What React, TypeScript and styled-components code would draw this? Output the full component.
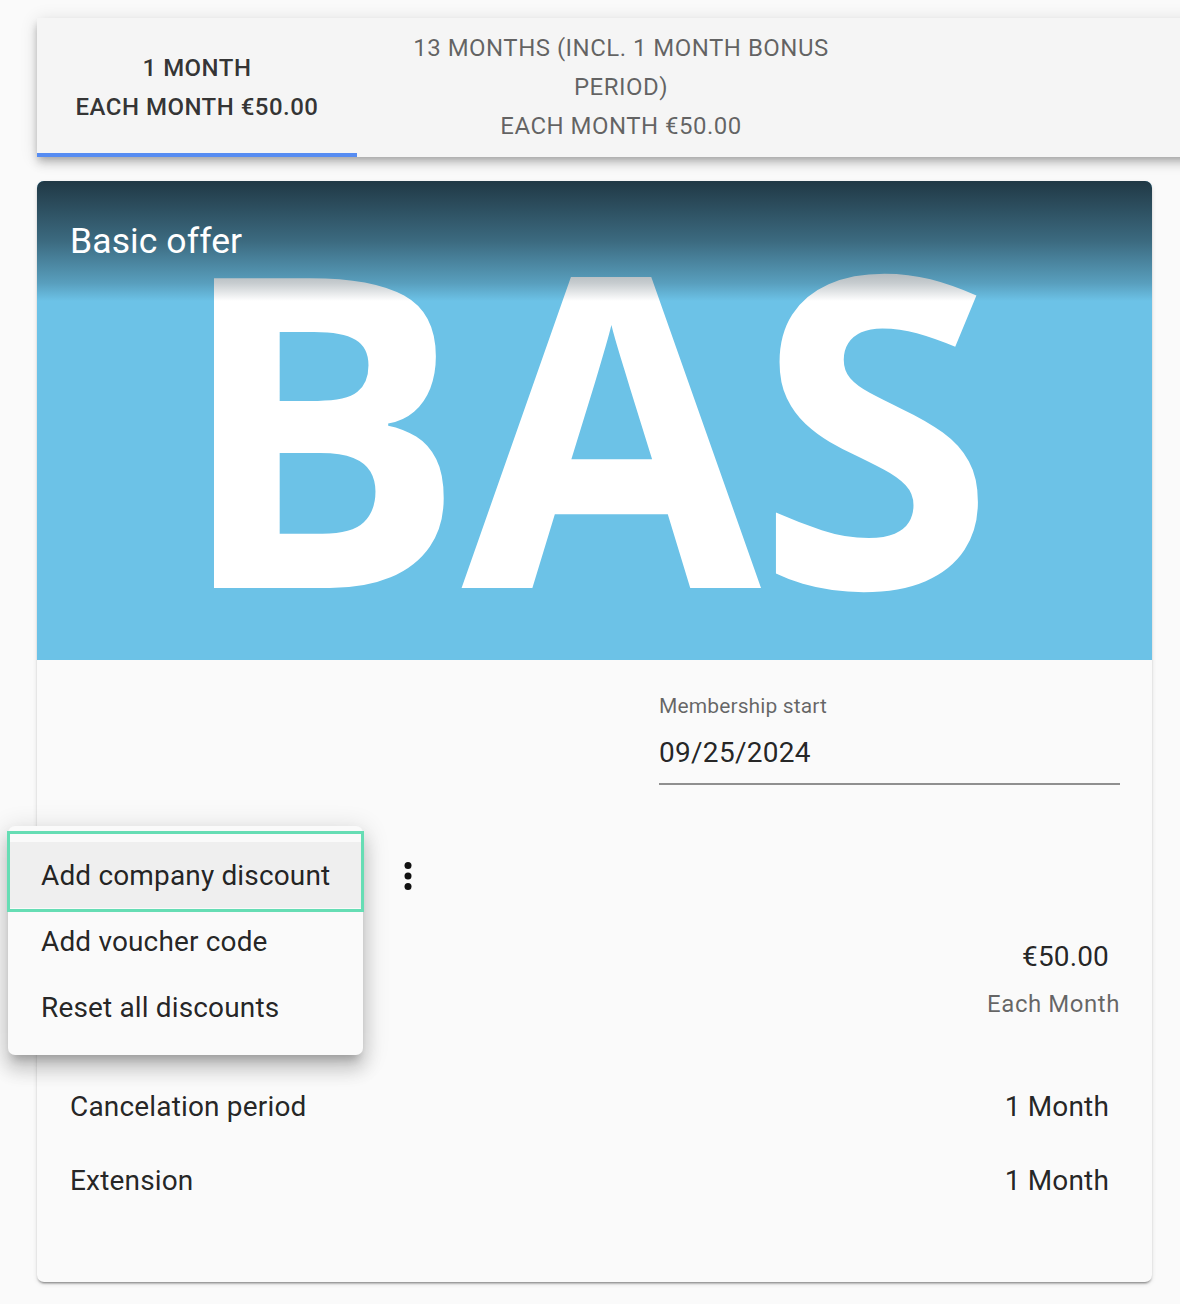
import React from "react";
import styled, { createGlobalStyle } from "styled-components";

const Global = createGlobalStyle`
  html, body { margin: 0; padding: 0; background: #fafafa; }
  body { font-family: Roboto, "Noto Sans", "Liberation Sans", sans-serif; -webkit-font-smoothing: antialiased; }
  * { box-sizing: border-box; }
`;

const Page = styled.div`
  position: relative;
  width: 1180px;
  min-height: 1304px;
  padding: 18px 0 0 37px;
  overflow: hidden;
`;

const TabBar = styled.div`
  display: flex;
  width: 1180px;
  height: 139px;
  background: #f5f5f5;
  box-shadow: 0 3.5px 7px -2px rgba(0,0,0,0.2), 0 7px 9px 0 rgba(0,0,0,0.14), 0 2px 17px 0 rgba(0,0,0,0.12);
`;

const Tab = styled.div<{ $w: number; $selected?: boolean }>`
  position: relative;
  width: ${(p) => p.$w}px;
  flex: none;
  display: flex;
  align-items: center;
  justify-content: center;
  padding: 0 28px;
  text-align: center;
  font-size: 24px;
  line-height: 39px;
  letter-spacing: 0.02em;
  text-transform: uppercase;
  font-weight: ${(p) => (p.$selected ? 500 : 400)};
  color: ${(p) => (p.$selected ? "rgba(0,0,0,0.8)" : "rgba(0,0,0,0.6)")};
  &::after {
    content: "";
    display: ${(p) => (p.$selected ? "block" : "none")};
    position: absolute;
    left: 0;
    right: 0;
    bottom: 0;
    height: 4px;
    background: #568cf2;
  }
`;

const Card = styled.div`
  margin-top: 24px;
  width: 1115px;
  border-radius: 7px;
  background: #fafafa;
  overflow: hidden;
  box-shadow: 0 3px 2px -2px rgba(0,0,0,0.3), 0 2px 2px 0 rgba(0,0,0,0.14), 0 2px 5px 0 rgba(0,0,0,0.1);
`;

const Media = styled.div`
  position: relative;
  height: 479px;
  background: #6cc2e7;
  overflow: hidden;
  padding: 22px 0 0 138px;
`;

const MediaLetters = styled.div`
  font-family: "Open Sans", "Liberation Sans", sans-serif;
  font-weight: 700;
  font-size: 434px;
  line-height: 434px;
  letter-spacing: -5px;
  color: #ffffff;
  white-space: nowrap;
  user-select: none;
`;

const Shade = styled.div`
  position: absolute;
  left: 0;
  right: 0;
  top: 0;
  height: 120px;
  background: linear-gradient(
    to bottom,
    rgba(30, 52, 64, 0.97) 0%,
    rgba(30, 52, 64, 0.62) 50%,
    rgba(30, 52, 64, 0.25) 85%,
    rgba(30, 52, 64, 0) 100%
  );
`;

const MediaTitle = styled.div`
  position: absolute;
  left: 33px;
  top: 40px;
  font-size: 35.5px;
  line-height: 40px;
  letter-spacing: 0.1px;
  color: #ffffff;
  font-weight: 400;
`;

const Body = styled.div`
  display: flex;
  flex-direction: column;
  padding: 34px 32px 65px 33px;
`;

const FieldRow = styled.div`
  display: flex;
  justify-content: flex-end;
`;

const DateField = styled.div`
  width: 461px;
  display: flex;
  flex-direction: column;
  border-bottom: 2px solid #8f8f8f;
  padding-bottom: 12px;
`;

const FieldLabel = styled.div`
  font-size: 21px;
  line-height: 24px;
  letter-spacing: 0.12px;
  color: rgba(0,0,0,0.6);
`;

const FieldValue = styled.div`
  margin-top: 17px;
  font-size: 28px;
  line-height: 36px;
  letter-spacing: 0.01em;
  color: rgba(0,0,0,0.87);
`;

const DiscountRow = styled.div`
  display: flex;
  align-items: center;
  height: 56px;
  margin-top: 63px;
  padding-left: 317px;
`;

const MoreButton = styled.button`
  width: 42px;
  height: 42px;
  padding: 0;
  border: none;
  background: transparent;
  display: flex;
  align-items: center;
  justify-content: center;
  color: #111;
`;

const PriceBlock = styled.div`
  margin-top: 32px;
  display: flex;
  flex-direction: column;
  align-items: flex-end;
`;

const Price = styled.div`
  font-size: 28px;
  line-height: 42px;
  letter-spacing: 0.15px;
  color: rgba(0,0,0,0.87);
  padding-right: 11px;
`;

const PriceNote = styled.div`
  margin-top: 8px;
  font-size: 24px;
  line-height: 36px;
  letter-spacing: 0.55px;
  color: rgba(0,0,0,0.6);
`;

const InfoList = styled.div`
  margin-top: 47px;
  display: flex;
  flex-direction: column;
`;

const InfoRow = styled.div`
  display: flex;
  justify-content: space-between;
  align-items: center;
  height: 74px;
  padding-right: 11px;
  font-size: 28px;
  letter-spacing: 0.17px;
  color: rgba(0,0,0,0.87);
`;

const Menu = styled.div`
  position: absolute;
  left: 8px;
  top: 826px;
  width: 355px;
  padding: 16px 0 15px;
  background: #fafafa;
  border-radius: 7px;
  box-shadow: 0 9px 9px -5px rgba(0,0,0,0.2), 0 14px 18px 2px rgba(0,0,0,0.14), 0 5px 25px 4px rgba(0,0,0,0.12);
  display: flex;
  flex-direction: column;
`;

const MenuItem = styled.div<{ $active?: boolean }>`
  height: 66px;
  display: flex;
  align-items: center;
  padding-left: 33px;
  font-size: 28px;
  letter-spacing: 0.15px;
  color: rgba(0,0,0,0.87);
  background: ${(p) => (p.$active ? "rgba(0,0,0,0.045)" : "transparent")};
`;

const FocusRing = styled.div`
  position: absolute;
  left: -1px;
  right: -1px;
  top: 5px;
  height: 81px;
  border: 3px solid #66ddb4;
  pointer-events: none;
`;

const MoreVert = () => (
  <svg width="42" height="42" viewBox="0 0 24 24" fill="currentColor" aria-hidden>
    <circle cx="12" cy="6" r="2" />
    <circle cx="12" cy="12" r="2" />
    <circle cx="12" cy="18" r="2" />
  </svg>
);

export default function App() {
  return (
    <>
      <Global />
      <Page>
        <TabBar>
          <Tab $w={320} $selected>
            <div>
              1 Month
              <br />
              Each month €50.00
            </div>
          </Tab>
          <Tab $w={528}>
            <div>
              13 Months (incl. 1 month bonus period)
              <br />
              Each month €50.00
            </div>
          </Tab>
        </TabBar>

        <Card>
          <Media>
            <MediaLetters>BAS</MediaLetters>
            <Shade />
            <MediaTitle>Basic offer</MediaTitle>
          </Media>
          <Body>
            <FieldRow>
              <DateField>
                <FieldLabel>Membership start</FieldLabel>
                <FieldValue>09/25/2024</FieldValue>
              </DateField>
            </FieldRow>
            <DiscountRow>
              <MoreButton aria-label="more">
                <MoreVert />
              </MoreButton>
            </DiscountRow>
            <PriceBlock>
              <Price>€50.00</Price>
              <PriceNote>Each Month</PriceNote>
            </PriceBlock>
            <InfoList>
              <InfoRow>
                <span>Cancelation period</span>
                <span>1 Month</span>
              </InfoRow>
              <InfoRow>
                <span>Extension</span>
                <span>1 Month</span>
              </InfoRow>
            </InfoList>
          </Body>
        </Card>

        <Menu>
          <MenuItem $active>Add company discount</MenuItem>
          <MenuItem>Add voucher code</MenuItem>
          <MenuItem>Reset all discounts</MenuItem>
          <FocusRing />
        </Menu>
      </Page>
    </>
  );
}
